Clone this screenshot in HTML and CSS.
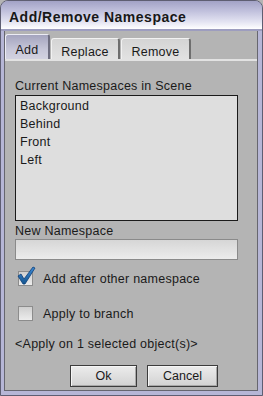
FILE: index.html
```html
<!DOCTYPE html>
<html lang="en">
<head>
  <meta charset="UTF-8" />
  <title>Add/Remove Namespace</title>
  <link rel="stylesheet" href="styles.css">
</head>
<body>
  <div class="window">
    <div class="titlebar">Add/Remove Namespace</div>

    <div class="client">
      <div class="tabs">
        <div class="tab active">Add</div>
        <div class="tab">Replace</div>
        <div class="tab">Remove</div>
      </div>

      <div class="panel">
        <div class="label">Current Namespaces in Scene</div>
        <ul class="listbox">
          <li>Background</li>
          <li>Behind</li>
          <li>Front</li>
          <li>Left</li>
        </ul>

        <div class="label label-new">New Namespace</div>
        <div class="textfield"></div>

        <div class="check-row first">
          <span class="checkbox">
            <svg class="tick" width="20" height="20" viewBox="0 0 20 20">
              <defs>
                <linearGradient id="tickFill" x1="0" y1="0" x2="0" y2="1">
                  <stop offset="0" stop-color="#3c8ad6"/>
                  <stop offset="1" stop-color="#14558f"/>
                </linearGradient>
              </defs>
              <path d="M2 10 L5 8 L8 13 L17 1 L19 2 L9 18 L7 18 Z" fill="url(#tickFill)" stroke="#0e3f78" stroke-width="0.8" stroke-linejoin="round"/>
            </svg>
          </span>
          <span class="check-text">Add after other namespace</span>
        </div>

        <div class="check-row second">
          <span class="checkbox"></span>
          <span class="check-text">Apply to branch</span>
        </div>

        <div class="label label-info">&lt;Apply on 1 selected object(s)&gt;</div>

        <div class="buttons">
          <button class="btn btn-ok">Ok</button>
          <button class="btn btn-cancel">Cancel</button>
        </div>
      </div>
    </div>
  </div>
</body>
</html>
```

FILE: styles.css
```css
body {
  margin: 0;
  background: #b4b4b4;
  font-family: "Liberation Sans", Arial, sans-serif;
  font-size: 12.5px;
  letter-spacing: 0.25px;
  color: #1a1a1a;
}

.window {
  width: 263px;
  height: 396px;
  box-sizing: border-box;
  border: 1px solid #5e5e72;
  border-radius: 8px 8px 0 0;
  background: #b6b6d6;
  display: flex;
  flex-direction: column;
  overflow: hidden;
}

.titlebar {
  height: 30px;
  box-sizing: border-box;
  padding: 7px 0 0 8px;
  background: linear-gradient(#a2a2c6, #c0c0dc 35%, #e4e4f2 75%, #fff);
  border-bottom: 2px solid #9d9dbf;
  font-size: 14px;
  font-weight: bold;
  letter-spacing: 0.5px;
  color: #181818;
  line-height: 18px;
}

.client {
  flex: 1;
  margin: 0 4px 4px 3px;
  border: 1px solid #66666f;
  border-top: none;
  background: #b4b4b4;
  display: flex;
  flex-direction: column;
}

.tabs {
  display: flex;
  align-items: flex-end;
  height: 25px;
  margin-top: 3px;
  gap: 1px;
}

.tab {
  height: 21px;
  box-sizing: border-box;
  padding: 6px 0 0;
  text-align: center;
  border: 1px solid #f2f2f2;
  border-right: 2px solid #6e6e6e;
  border-bottom: none;
  border-radius: 3px 3px 0 0;
  background: linear-gradient(#d4d4d4, #e2e2e2);
  line-height: 14px;
}

.tab:nth-child(2) { width: 69px; }
.tab:nth-child(3) { width: 70px; }

.tab.active {
  width: 45px;
  height: 25px;
  padding-top: 8px;
  background: linear-gradient(#a4a4be, #c6c6d8 60%, #d2d2e0);
  border-color: #ececf4 #6e6e80 transparent #ececf4;
}

.panel {
  flex: 1;
  border-top: 2px solid #e2e2e2;
  padding: 0 19px 0 10px;
}

.label {
  line-height: 14px;
}

.panel > .label:first-child {
  margin-top: 18px;
}

.listbox {
  list-style: none;
  margin: 2px 0 0;
  padding: 1px 0 0 4px;
  height: 126px;
  box-sizing: border-box;
  border: 1px solid #1a1a1a;
  background: #dedede;
}

.listbox li {
  line-height: 18px;
}

.label-new {
  margin-top: 3px;
}

.textfield {
  margin-top: 1px;
  height: 21px;
  box-sizing: border-box;
  border: 1px solid #8a8a8a;
  background: linear-gradient(#d6d6d6, #ececec);
}

.check-row {
  display: flex;
  align-items: center;
  height: 16px;
  padding-left: 3px;
}

.check-row.first {
  margin-top: 10px;
}

.check-row.second {
  margin-top: 19px;
}

.checkbox {
  position: relative;
  width: 15px;
  height: 15px;
  box-sizing: border-box;
  border: 1px solid #8c8c8c;
  background: linear-gradient(#cfcfcf, #ececec);
}

.tick {
  position: absolute;
  left: -3px;
  top: -6px;
}

.check-text {
  margin-left: 10px;
  padding-top: 2px;
}

.label-info {
  margin-top: 16px;
}

.buttons {
  display: flex;
  gap: 10px;
  margin-top: 14px;
  padding-left: 55px;
}

.btn {
  height: 22px;
  padding: 0;
  font: inherit;
  color: #1a1a1a;
  border: 1px solid #3c3c3c;
  box-shadow: inset 1px 1px 0 #f6f6f6, inset -1px -1px 0 #a8a8a8;
  background: linear-gradient(#ececec, #d2d2d2);
}

.btn-ok { width: 67px; }
.btn-cancel { width: 71px; }
```
